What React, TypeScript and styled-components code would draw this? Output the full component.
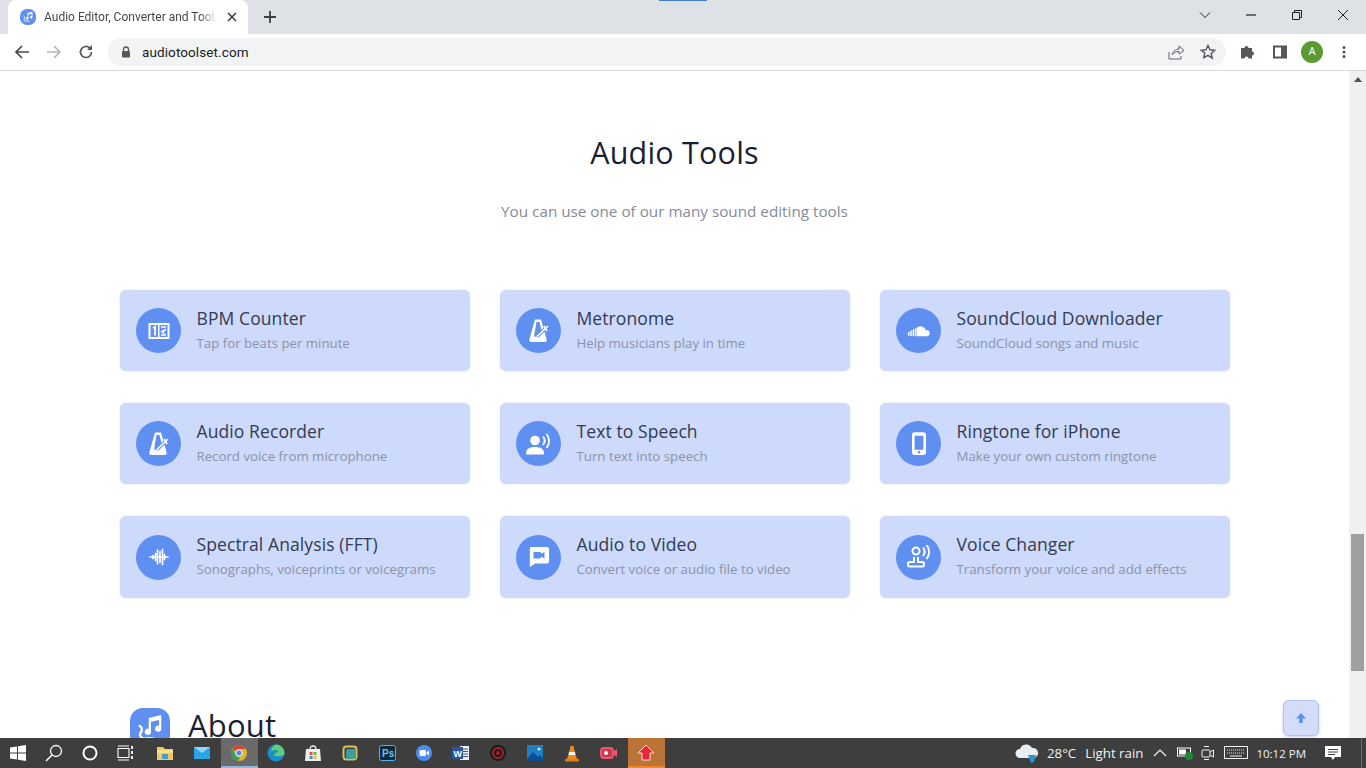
import React from "react";
import styled, { createGlobalStyle } from "styled-components";

const Global = createGlobalStyle`
  html, body { margin: 0; padding: 0; height: 100%; overflow: hidden; background: #fff; }
  #root { height: 100%; }
  * { box-sizing: border-box; }
`;

const Screen = styled.div`
  width: 1366px; height: 768px; display: flex; flex-direction: column; overflow: hidden;
  position: relative; font-family: "Open Sans", "Liberation Sans", sans-serif;
`;

/* ---------- browser chrome ---------- */
const TabStrip = styled.div`
  height: 34px; flex: none; background: #dee1e6; display: flex; align-items: flex-end; position: relative;
`;
const TopMark = styled.div`
  position: absolute; top: 0; left: 659px; width: 48px; height: 1px; background: #3f7cc4;
`;
const Tab = styled.div`
  width: 240px; height: 34px; margin-left: 8px; background: #fff; border-radius: 8px 8px 0 0;
  display: flex; align-items: center; padding: 0 8px 0 12px; gap: 8px;
`;
const TabTitle = styled.span`
  width: 173px; flex: none; overflow: hidden; white-space: nowrap; font: 12px "Roboto", "Liberation Sans", sans-serif; color: #45474a;
  -webkit-mask-image: linear-gradient(90deg, #000 90%, transparent);
  mask-image: linear-gradient(90deg, #000 90%, transparent);
`;
const TabClose = styled.span`
  margin-left: -1px; width: 16px; height: 16px; flex: none; display: flex; align-items: center; justify-content: center;
`;
const NewTab = styled.span`
  margin-left: 13px; align-self: center; width: 18px; height: 18px; display: flex; align-items: center; justify-content: center;
`;
const WindowControls = styled.div`
  margin-left: auto; align-self: stretch; display: flex; align-items: center; padding-bottom: 4px;
`;
const WinButton = styled.span<{ $w: number }>`
  width: ${(p) => p.$w}px; display: flex; justify-content: center; align-items: center;
`;
const Toolbar = styled.div`
  height: 37px; flex: none; background: #fff; border-bottom: 1px solid #d6d7d9; display: flex; align-items: center;
  padding: 0 5px 1px 13px;
`;
const NavIcon = styled.span<{ $mr?: number }>`
  width: 18px; height: 18px; display: flex; margin-right: ${(p) => p.$mr ?? 14}px; align-items: center; justify-content: center;
`;
const Omnibox = styled.div`
  width: 1118px; height: 28px; flex: none; border-radius: 14px; background: #f1f3f4; display: flex; align-items: center;
  padding: 0 10px 0 12px;
`;
const Url = styled.span`
  margin-left: 10px; font: 13.5px "Roboto", "Liberation Sans", sans-serif; color: #202124; letter-spacing: 0.1px;
`;
const OmniRight = styled.div`
  margin-left: auto; display: flex; gap: 15px; align-items: center;
`;
const ToolRight = styled.div`
  margin-left: 6px; display: flex; align-items: center;
`;
const ToolSlot = styled.span`
  width: 32px; height: 28px; display: flex; align-items: center; justify-content: center;
`;
const Avatar = styled.span`
  width: 22px; height: 22px; border-radius: 50%; background: #5b9a32; color: #fff; font: 11px "Roboto", sans-serif;
  display: flex; align-items: center; justify-content: center;
`;

/* ---------- page ---------- */
const Viewport = styled.div`
  flex: 1; min-height: 0; display: flex; overflow: hidden; position: relative; background: #fff;
`;
const Page = styled.main`
  flex: 1; min-width: 0; padding: 59px 120px 0 120px; overflow: hidden; color: #1b2032;
`;
const Heading = styled.h2`
  margin: 0; text-align: center; font: 400 30.5px/44px "Open Sans", sans-serif; letter-spacing: 0.2px; color: #1a1f33;
`;
const Lead = styled.p`
  margin: 25px 0 0; text-align: center; font: 400 15.25px/24px "Open Sans", sans-serif; color: #858b9b;
`;
const Grid = styled.div`
  margin-top: 67px; display: grid; grid-template-columns: repeat(3, 350px); column-gap: 30px;
  grid-template-rows: 81px 81px 82px; row-gap: 32px;
`;
const Card = styled.a`
  background: #cddafb; border-radius: 6px; box-shadow: 0 0 2px rgba(140, 160, 220, 0.35);
  display: flex; align-items: center; padding: 0 16px; gap: 15.5px; min-width: 0;
`;
const Round = styled.span`
  width: 45px; height: 45px; flex: none; border-radius: 50%; background: #5f8ff1; display: flex; align-items: center; justify-content: center;
`;
const CardText = styled.div`
  display: flex; flex-direction: column; gap: 3px; white-space: nowrap; margin-top: -3px;
`;
const CardTitle = styled.div`
  font: 400 17.5px/24px "Open Sans", sans-serif; letter-spacing: 0.1px; color: #333a52;
`;
const CardSub = styled.div`
  font: 400 13.25px/20px "Open Sans", sans-serif; color: #8b93a8;
`;
const About = styled.div`
  margin: 110px 0 0 10px; display: flex; align-items: center; gap: 18px; height: 40px;
`;
const AboutLogo = styled.span`
  width: 40px; height: 40px; flex: none; border-radius: 13px; background: #5f8ff1; display: flex; align-items: center; justify-content: center;
`;
const AboutTitle = styled.span`
  font: 400 31px/40px "Open Sans", sans-serif; color: #1a1f33; letter-spacing: 0.2px; margin-top: -6px;
`;
const Scrollbar = styled.div`
  width: 17px; flex: none; background: #f0f0f0; position: relative; display: flex; flex-direction: column; align-items: center;
`;
const ArrowUp = styled.span`
  margin-top: 6px; width: 0; height: 0; border-left: 4.5px solid transparent; border-right: 4.5px solid transparent; border-bottom: 5px solid #505050;
`;
const Thumb = styled.div`
  position: absolute; top: 463px; left: 2px; width: 13px; height: 137px; background: #a0a0a0;
`;
const BackTop = styled.button`
  position: absolute; right: 47px; bottom: 2px; width: 36px; height: 36px; border-radius: 6px; border: 1px solid #b3c3ef;
  background: #d3dcf8; padding: 0; display: flex; align-items: center; justify-content: center; box-shadow: 0 1px 3px rgba(90,120,210,.35);
`;

/* ---------- taskbar ---------- */
const Taskbar = styled.footer`
  height: 30px; flex: none; background: #3e3e3e; display: flex; align-items: center; color: #fff; position: relative;
`;
const SystemGroup = styled.div`
  display: flex; align-items: center;
`;
const AppGroup = styled.div`
  display: flex; align-items: center; margin-left: 2.5px;
`;
const Slot = styled.span<{ $active?: boolean; $w?: number; $hot?: boolean }>`
  width: ${(p) => p.$w ?? 37}px; height: 30px; flex: none; display: flex; align-items: center; justify-content: center;
  background: ${(p) => (p.$hot ? "#bb7336" : p.$active ? "#6a6a6a" : "transparent")};
  border-bottom: 2px solid ${(p) => (p.$hot ? "#f08a24" : p.$active ? "#8fb8e0" : "transparent")};
  border-top: 2px solid transparent;
`;
const Tray = styled.div`
  margin-left: auto; display: flex; align-items: center; height: 30px; padding-right: 4px;
`;
const TrayText = styled.span<{ $ml?: number }>`
  font: 13.3px "Open Sans", "Liberation Sans", sans-serif; color: #f2f2f2; margin-left: ${(p) => p.$ml ?? 0}px; white-space: nowrap;
`;
const TrayClock = styled.span`
  font: 11.5px "Open Sans", "Liberation Sans", sans-serif; color: #f2f2f2; margin-left: 8px; white-space: nowrap;
`;
const TrayIcon = styled.span<{ $ml: number }>`
  margin-left: ${(p) => p.$ml}px; display: flex;
`;
const TraySeparator = styled.span`
  width: 1px; height: 30px; margin-left: 20px; background: #6a6a6a;
`;

/* ---------- icons ---------- */
const I = ({ s = 16, children }: { s?: number; children: React.ReactNode }) => (
  <svg width={s} height={s} viewBox={`0 0 ${s} ${s}`} fill="none">{children}</svg>
);

const Note = ({ s = 12 }: { s?: number }) => (
  <svg width={s} height={s} viewBox="0 0 24 24" fill="#fff">
    <path d="M11 4l10-2.500v11a2.500 2.500 0 1 1-1.800-2.400V5.500L12.800 7v8a2.500 2.500 0 1 1-1.800-2.400z" />
    <path d="M3 10c3 1 3 4 1.500 6s1 5 4 4.500 5-1 7 .5" stroke="#fff" strokeWidth="1.800" fill="none" />
  </svg>
);

const Metronome = () => (
  <svg width="20" height="24" viewBox="0 0 20 24" fill="#fff">
    <path fillRule="evenodd" d="M6 .5h6L17.500 20c.5 2 0 3-2 3h-13c-2 0-2.500-1-2-3zM7.500 3h3L13 13l-4 4.500H5z" />
    <path d="M8 17.500L19 7" stroke="#5f8ff1" strokeWidth="3.500" fill="none" />
    <path d="M8 17.500L19 7M15 7l3 5" stroke="#fff" strokeWidth="1.700" fill="none" />
  </svg>
);

const Bpm = () => (
  <svg width="24" height="20" viewBox="0 0 24 20" fill="none" stroke="#fff">
    <rect x="1.500" y="2" width="21" height="16" fill="#fff" stroke="none" />
    <rect x="3.500" y="4" width="7.500" height="12" fill="#5f8ff1" stroke="none" />
    <rect x="12.500" y="4" width="8" height="12" fill="#5f8ff1" stroke="none" />
    <path d="M6 7l2-1.200V14.500" strokeWidth="1.800" />
    <path d="M14 6h5M19 8.500l-5 2.500M14 14h5M16.500 10v3" strokeWidth="1.600" />
  </svg>
);

const Cloud = () => (
  <svg width="24" height="12" viewBox="0 0 26 14" fill="#fff">
    <path d="M10 13V3.500A6.500 6.500 0 0 1 21 6.200 3.500 3.500 0 1 1 22 13z" />
    <rect x="8" y="4" width="1.300" height="9" /><rect x="6" y="5" width="1.300" height="8" />
    <rect x="4" y="6" width="1.300" height="7" /><rect x="2" y="7" width="1.300" height="6" /><rect x="0" y="8.500" width="1.300" height="4" />
  </svg>
);

const Speaker = () => (
  <svg width="26" height="24" viewBox="0 0 26 24" fill="#fff">
    <circle cx="9" cy="8.500" r="4.800" />
    <path d="M0 21c0-4 3.500-6 9-6s9 2 9 6v1.500H0z" />
    <path d="M17 4.500c2 2.500 2 6 0 8.500M20.500 2c3.500 4 3.500 10 0 14" stroke="#fff" strokeWidth="1.800" fill="none" />
  </svg>
);

const Phone = () => (
  <svg width="14" height="23" viewBox="0 0 16 26" fill="#fff">
    <path fillRule="evenodd" d="M3 0h10a3 3 0 0 1 3 3v20a3 3 0 0 1-3 3H3a3 3 0 0 1-3-3V3a3 3 0 0 1 3-3zm0 4v16h10V4zm5 17.500a1.500 1.500 0 1 0 0 3 1.500 1.500 0 0 0 0-3z" />
  </svg>
);

const Wave = () => (
  <svg width="22" height="20" viewBox="0 0 22 20" stroke="#fff" strokeWidth="1.700" strokeLinecap="round">
    <path d="M2 10h18" /><path d="M5 8.500v3M7.500 6.500v7M9.500 3v14M12 4.500v11M14.500 2.500v15M16.500 7.500v5" />
  </svg>
);

const VideoChat = () => (
  <svg width="22" height="22" viewBox="0 0 24 24" fill="#fff">
    <path fillRule="evenodd" d="M3 1h18a2 2 0 0 1 2 2v14a2 2 0 0 1-2 2H8l-6 4V3a2 2 0 0 1 1-2zm3 5.500v7h8v-2l4 2v-7l-4 2v-2z" />
  </svg>
);

const Voice = () => (
  <svg width="26" height="24" viewBox="0 0 26 24" fill="none" stroke="#fff" strokeWidth="2">
    <circle cx="10" cy="6" r="3.500" />
    <path d="M8 12v5H4a2 2 0 0 0-2 2v1a1.500 1.500 0 0 0 1.500 1.500h13A1.500 1.500 0 0 0 18 20v-1a2 2 0 0 0-2-2h-4v-5" />
    <path d="M17 2.500c2 2.500 2 6 0 8.500M20.500 0c3.500 4 3.500 10 0 14" />
  </svg>
);

const tools: { t: string; d: string; i: React.ReactNode }[] = [
  { t: "BPM Counter", d: "Tap for beats per minute", i: <Bpm /> },
  { t: "Metronome", d: "Help musicians play in time", i: <Metronome /> },
  { t: "SoundCloud Downloader", d: "SoundCloud songs and music", i: <Cloud /> },
  { t: "Audio Recorder", d: "Record voice from microphone", i: <Metronome /> },
  { t: "Text to Speech", d: "Turn text into speech", i: <Speaker /> },
  { t: "Ringtone for iPhone", d: "Make your own custom ringtone", i: <Phone /> },
  { t: "Spectral Analysis (FFT)", d: "Sonographs, voiceprints or voicegrams", i: <Wave /> },
  { t: "Audio to Video", d: "Convert voice or audio file to video", i: <VideoChat /> },
  { t: "Voice Changer", d: "Transform your voice and add effects", i: <Voice /> },
];

const gray = "#5f6368";

export default function App() {
  return (
    <Screen>
      <Global />
      <TabStrip>
        <TopMark />
        <Tab>
          <svg width="16" height="16" viewBox="0 0 16 16">
            <rect width="16" height="16" rx="7" fill="#5f8ff1" />
            <g transform="translate(2 2)"><Note /></g>
          </svg>
          <TabTitle>Audio Editor, Converter and Tools</TabTitle>
          <TabClose>
            <I s={10}><path d="M1 1l8 8M9 1l-8 8" stroke="#3c4043" strokeWidth="1.600" /></I>
          </TabClose>
        </Tab>
        <NewTab>
          <I s={14}><path d="M7 1v12M1 7h12" stroke="#3c4043" strokeWidth="1.800" /></I>
        </NewTab>
        <WindowControls>
          <WinButton $w={46}>
            <I s={12}><path d="M1 3.500l5 5 5-5" stroke="#222" strokeWidth="1" /></I>
          </WinButton>
          <WinButton $w={46}>
            <I s={12}><path d="M1 6h10" stroke="#222" strokeWidth="1.200" /></I>
          </WinButton>
          <WinButton $w={46}>
            <I s={12}><path d="M1.500 3.500h7v7h-7zM3.500 3.500v-2h7v7h-2" stroke="#222" strokeWidth="1" /></I>
          </WinButton>
          <WinButton $w={46}>
            <I s={12}><path d="M1 1l10 10M11 1L1 11" stroke="#222" strokeWidth="1" /></I>
          </WinButton>
        </WindowControls>
      </TabStrip>
      <Toolbar>
        <NavIcon>
          <I s={16}><path d="M15 8H2M8 2L2 8l6 6" stroke="#45484c" strokeWidth="1.700" /></I>
        </NavIcon>
        <NavIcon>
          <I s={16}><path d="M1 8h13M8 2l6 6-6 6" stroke="#b4b6b9" strokeWidth="1.700" /></I>
        </NavIcon>
        <NavIcon $mr={13}>
          <I s={16}>
            <path d="M13.500 8a5.500 5.500 0 1 1-1.600-3.900" stroke="#55585c" strokeWidth="1.700" />
            <path d="M14 1v5H9z" fill="#55585c" />
          </I>
        </NavIcon>
        <Omnibox>
          <I s={12}>
            <path d="M3.500 5V3.500a2.500 2.500 0 0 1 5 0V5" stroke="#55585c" strokeWidth="1.300" />
            <rect x="2" y="5" width="8" height="6.500" rx="1" fill="#55585c" />
          </I>
          <Url>audiotoolset.com</Url>
          <OmniRight>
            <I s={18}>
              <path d="M2 9v7h12v-3" stroke={gray} strokeWidth="1" />
              <path d="M5 12c1-4 4-6 7-6V3l5 4.500L12 11V8.500c-3 0-5 1-7 3.500z" stroke={gray} strokeWidth="1" />
            </I>
            <I s={16}>
              <path d="M8 1.500l2 4.300 4.700.5-3.500 3.200 1 4.700L8 11.300l-4.200 2.400 1-4.700L1.300 6.300 6 5.800z" stroke="#55585c" strokeWidth="1.400" />
            </I>
          </OmniRight>
        </Omnibox>
        <ToolRight>
          <ToolSlot>
            <I s={16}>
              <path d="M1 5h3.500a2 2 0 1 1 4 0H12v3.500a2 2 0 1 1 0 4V15.500H8.500a2 2 0 1 0-4 0H1z" fill="#55585c" transform="translate(0 -1)" />
            </I>
          </ToolSlot>
          <ToolSlot>
            <I s={18}>
              <rect x="2" y="2.500" width="14" height="13" fill="#55585c" />
              <rect x="4" y="4.500" width="6" height="9" fill="#fff" />
            </I>
          </ToolSlot>
          <ToolSlot><Avatar>A</Avatar></ToolSlot>
          <ToolSlot>
            <I s={14}>
              <circle cx="7" cy="2.500" r="1.500" fill="#55585c" />
              <circle cx="7" cy="7" r="1.500" fill="#55585c" />
              <circle cx="7" cy="11.500" r="1.500" fill="#55585c" />
            </I>
          </ToolSlot>
        </ToolRight>
      </Toolbar>

      <Viewport>
        <Page>
          <Heading>Audio Tools</Heading>
          <Lead>You can use one of our many sound editing tools</Lead>
          <Grid>
            {tools.map((x) => (
              <Card key={x.t}>
                <Round>{x.i}</Round>
                <CardText>
                  <CardTitle>{x.t}</CardTitle>
                  <CardSub>{x.d}</CardSub>
                </CardText>
              </Card>
            ))}
          </Grid>
          <About>
            <AboutLogo><Note s={30} /></AboutLogo>
            <AboutTitle>About</AboutTitle>
          </About>
        </Page>
        <Scrollbar>
          <ArrowUp />
          <Thumb />
        </Scrollbar>
        <BackTop aria-label="Back to top">
          <I s={12}><path d="M6 1L1 6.500H4.200V11h3.600V6.500H11z" fill="#5f8ff1" /></I>
        </BackTop>
      </Viewport>

      <Taskbar>
        <SystemGroup>
          <Slot $w={36}>
            <svg width="16" height="16" viewBox="0 0 16 16" fill="#fff"><path d="M0 2.500l7-1v6H0zM8 1.300L16 0v7.500H8zM0 8.500h7v6l-7-1zM8 8.500h8V16l-8-1.300z" /></svg>
          </Slot>
          <Slot $w={36}>
            <I s={18}><circle cx="11" cy="7" r="5.500" stroke="#fff" strokeWidth="1.300" /><path d="M7 11l-6 6" stroke="#fff" strokeWidth="1.500" /></I>
          </Slot>
          <Slot $w={36}>
            <I s={16}><circle cx="8" cy="8" r="6.500" stroke="#fff" strokeWidth="2" /></I>
          </Slot>
          <Slot $w={36}>
            <I s={18}>
              <path d="M1 4.500h11v9H1zM1 2h11M1 16h11" stroke="#fff" strokeWidth="1.100" />
              <path d="M15 2v3M15 7v3M15 12v3" stroke="#fff" strokeWidth="1.800" />
            </I>
          </Slot>
        </SystemGroup>
        <AppGroup>
          <Slot>
            <I s={18}>
              <path d="M1 3h6l2 2h8v11H1z" fill="#f4c95d" />
              <path d="M1 6h16v3H1z" fill="#fbe08a" />
              <rect x="6" y="10" width="6" height="5" fill="#3f9fc9" />
            </I>
          </Slot>
          <Slot>
            <I s={18}>
              <rect x="1" y="3" width="16" height="12" fill="#2aa4e6" />
              <path d="M1 3l8 6 8-6z" fill="#8fd6f7" />
            </I>
          </Slot>
          <Slot $active>
            <svg width="16" height="16" viewBox="0 0 16 16">
              <circle cx="8" cy="8" r="8" fill="#e0b52e" />
              <path d="M8 0a8 8 0 0 1 6.900 4H8a4 4 0 0 0-3.700 2.500L1.500 3.200A8 8 0 0 1 8 0z" fill="#d2493a" />
              <path d="M1.500 3.200l3.300 7A4 4 0 0 0 9 12l-2 4A8 8 0 0 1 1.500 3.200z" fill="#3c9d56" />
              <circle cx="8" cy="8" r="3.200" fill="#4c8be8" stroke="#fff" />
            </svg>
          </Slot>
          <Slot>
            <svg width="18" height="18" viewBox="0 0 18 18">
              <circle cx="9" cy="9" r="8.500" fill="#1b8fc9" />
              <path d="M9 .5a8.500 8.500 0 0 1 8.500 8.500c0 2-2 3-5 3H7c0-3 3-4 5-4-1-2-5-3-8 0A8 8 0 0 1 9 .5z" fill="#5ed07a" />
            </svg>
          </Slot>
          <Slot>
            <I s={18}>
              <path d="M2 5h14l1 12H1z" fill="#eeeeee" />
              <path d="M6 5c0-4 6-4 6 0" stroke="#eee" strokeWidth="1.300" />
              <rect x="5.500" y="8" width="3" height="3" fill="#e2563f" />
              <rect x="9.500" y="8" width="3" height="3" fill="#69b34c" />
              <rect x="5.500" y="12" width="3" height="3" fill="#3d8fd8" />
              <rect x="9.500" y="12" width="3" height="3" fill="#f0b93a" />
            </I>
          </Slot>
          <Slot>
            <I s={16}><rect x="1.500" y="1.500" width="13" height="13" rx="3" stroke="#d8c25a" strokeWidth="2" /><rect x="4" y="4" width="10" height="10" rx="2" fill="#3c9f9a" /></I>
          </Slot>
          <Slot>
            <svg width="17" height="16" viewBox="0 0 17 16">
              <rect x=".5" y=".5" width="16" height="15" rx="2" fill="#0d2a3a" stroke="#4fb3e8" />
              <text x="3" y="12" fontSize="10" fontFamily="Liberation Sans" fontWeight="700" fill="#6cc5ee">Ps</text>
            </svg>
          </Slot>
          <Slot>
            <svg width="16" height="16" viewBox="0 0 16 16">
              <circle cx="8" cy="8" r="8" fill="#4a8cf0" />
              <rect x="3.500" y="5" width="6.500" height="6" rx="1" fill="#fff" />
              <path d="M10.500 7.500l2.500-2v5l-2.500-2z" fill="#fff" />
            </svg>
          </Slot>
          <Slot>
            <svg width="18" height="16" viewBox="0 0 18 16">
              <rect x="8" y="1" width="9" height="14" fill="#f2f2f2" />
              <path d="M9 4h7M9 6.500h7M9 9h7M9 11.500h7" stroke="#2a5699" />
              <rect x="0" y="2" width="11" height="12" fill="#2a5699" />
              <text x="1.500" y="11.500" fontSize="9" fontFamily="Liberation Sans" fontWeight="700" fill="#fff">W</text>
            </svg>
          </Slot>
          <Slot>
            <svg width="16" height="16" viewBox="0 0 16 16">
              <circle cx="8" cy="8" r="8" fill="#1b1b1b" />
              <circle cx="8" cy="8" r="6" fill="#a8202a" />
              <circle cx="8" cy="8" r="3" fill="none" stroke="#1b1b1b" strokeWidth="2" />
            </svg>
          </Slot>
          <Slot>
            <svg width="16" height="16" viewBox="0 0 16 16">
              <rect width="16" height="16" fill="#1f7fc4" />
              <path d="M0 14l6-7 5 5 2-2 3 3v3H0z" fill="#0c4f8c" />
              <circle cx="12" cy="4" r="1.500" fill="#cfeefc" />
            </svg>
          </Slot>
          <Slot>
            <svg width="16" height="17" viewBox="0 0 16 17">
              <path d="M6.500 1h3l1 5h-5z" fill="#f08a1d" />
              <path d="M5.200 6.500h5.600l1 4H4.200z" fill="#f7f1e6" />
              <path d="M3.800 11h8.400L13 14H3z" fill="#f08a1d" />
              <rect x="1" y="14" width="14" height="2.500" fill="#e57d14" />
            </svg>
          </Slot>
          <Slot>
            <svg width="18" height="14" viewBox="0 0 18 14" fill="none">
              <rect x="1" y="2" width="12" height="10" rx="3" fill="#c43a50" stroke="#f0566a" strokeWidth="2" />
              <circle cx="6" cy="7" r="2" fill="#fff" />
              <path d="M14 5l3-2v8l-3-2z" fill="#f0566a" />
            </svg>
          </Slot>
          <Slot $hot>
            <svg width="18" height="18" viewBox="0 0 18 18">
              <path d="M9 1l8 8h-4v7H5V9H1z" fill="#e6273a" stroke="#fff" strokeWidth="0.800" />
            </svg>
          </Slot>
        </AppGroup>
        <Tray>
          <svg width="24" height="22" viewBox="0 0 24 22">
            <path d="M5 16a4.500 4.500 0 0 1 0-9 6.500 6.500 0 0 1 12-1 5 5 0 0 1 2 10z" fill="#e9eef5" />
            <path d="M13 13l8 0-2 7-3 1z" fill="#2a93d0" />
          </svg>
          <TrayText $ml={8}>28°C</TrayText>
          <TrayText $ml={9}>Light rain</TrayText>
          <TrayIcon $ml={10}>
            <I s={14}><path d="M1 10l6-6 6 6" stroke="#f2f2f2" strokeWidth="1.200" /></I>
          </TrayIcon>
          <TrayIcon $ml={10}>
            <svg width="16" height="14" viewBox="0 0 16 14" fill="none">
              <rect x=".5" y="2" width="13" height="8" stroke="#fff" />
              <rect x="2" y="3.500" width="7" height="5" fill="#fff" />
              <circle cx="12" cy="10" r="4" fill="#1c8a3a" />
            </svg>
          </TrayIcon>
          <TrayIcon $ml={8}>
            <svg width="14" height="18" viewBox="0 0 14 18" fill="none" stroke="#f2f2f2">
              <rect x="1" y="6" width="8" height="7" rx="1" />
              <path d="M9 8l3.500-2v7L9 11M3 2.500h5M3 15.500h5" />
            </svg>
          </TrayIcon>
          <TrayIcon $ml={9}>
            <svg width="24" height="14" viewBox="0 0 24 14" fill="none" stroke="#f2f2f2">
              <rect x=".5" y=".5" width="23" height="12" />
              <path d="M3 4h18M3 7h18" strokeDasharray="1 1" />
              <path d="M6 10h12" />
            </svg>
          </TrayIcon>
          <TrayClock>10:12 PM</TrayClock>
          <TrayIcon $ml={19}>
            <svg width="16" height="16" viewBox="0 0 16 16" fill="#fff">
              <path fillRule="evenodd" d="M0 1h16v11h-6l-2 3-2-3H0zM3 4v1h10V4zm0 2.500v1h10v-1zM3 9v1h7V9z" />
            </svg>
          </TrayIcon>
          <TraySeparator />
        </Tray>
      </Taskbar>
    </Screen>
  );
}
